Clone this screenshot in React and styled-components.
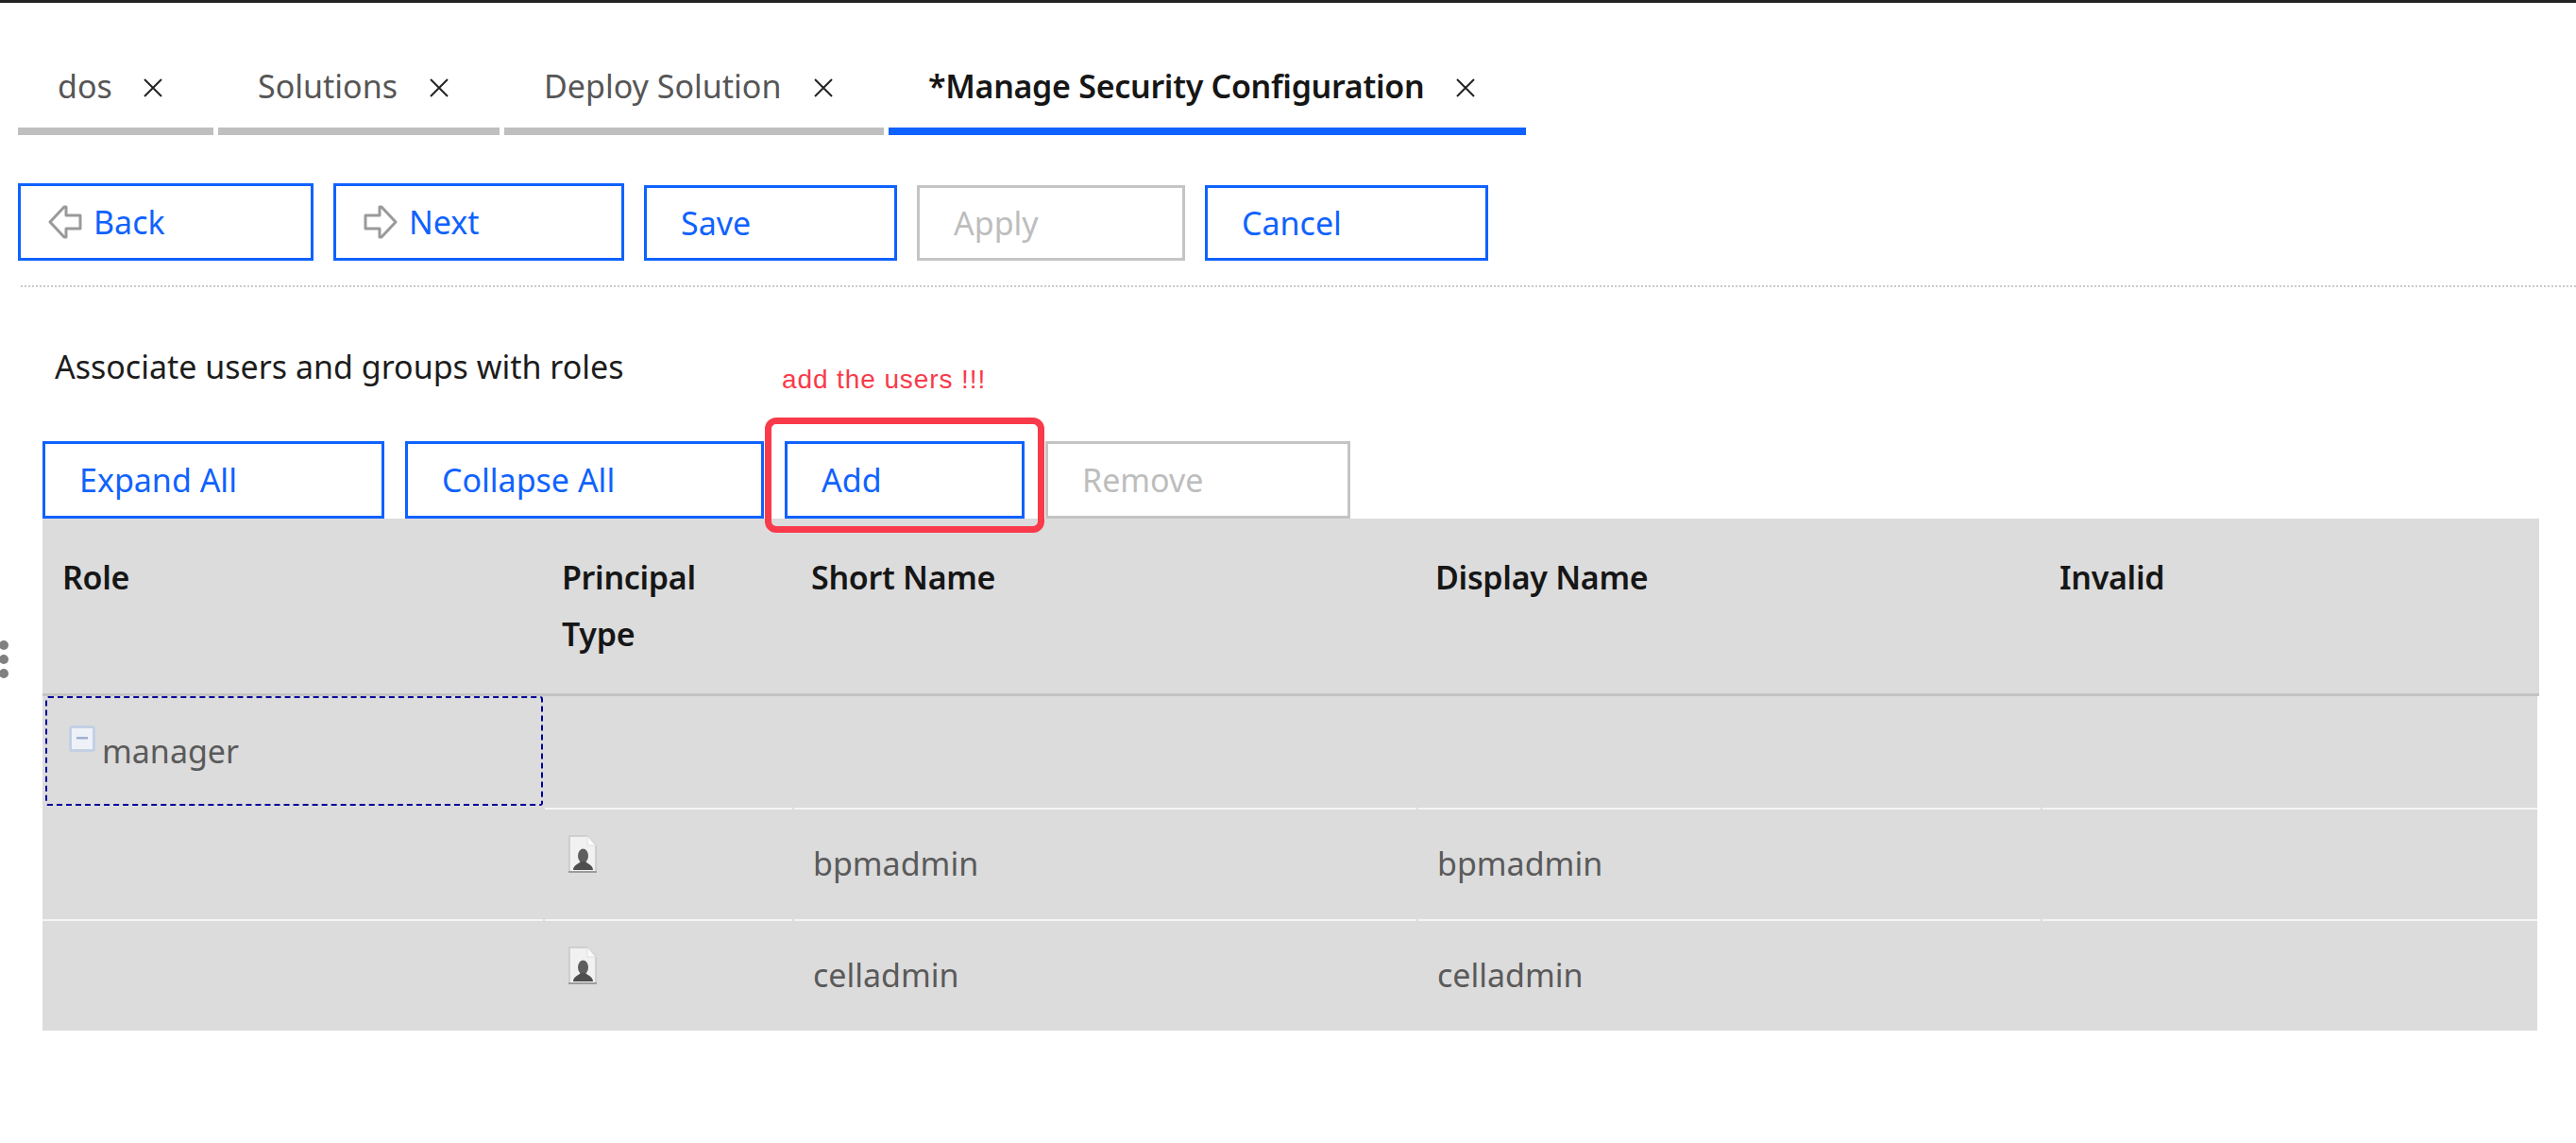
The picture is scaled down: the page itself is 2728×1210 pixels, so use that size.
import React from 'react';
import styled, { createGlobalStyle } from 'styled-components';

const Global = createGlobalStyle`
    html, body {
        margin: 0;
        padding: 0;
        background: #fff;
    }
    body {
        font-family: "Noto Sans", "Open Sans", sans-serif;
        overflow: hidden;
    }
`

const Page = styled.div`
    width: 2728px;
    height: 1210px;
    box-sizing: border-box;
    border-top: 3px solid #222;
    overflow: hidden;
`

const TabBar = styled.div`
    display: flex;
    gap: 5px;
    margin: 67px 0 0 19px;
`

const Tab = styled.div`
    width: ${props => props.$width}px;
    height: 73px;
    box-sizing: border-box;
    padding: 0 53px 24px 42px;
    display: flex;
    align-items: center;
    justify-content: space-between;
    border-bottom: 8px solid ${props => props.$active ? '#0f62fe' : '#bfbfbf'};
    color: ${props => props.$active ? '#161616' : '#565656'};
    font-size: 34px;
    font-weight: ${props => props.$active ? 600 : 400};
    letter-spacing: ${props => props.$active ? '-0.3px' : '0'};
`

const CloseIcon = styled.svg`
    width: 22px;
    height: 22px;
    flex: none;
    margin-top: 4px;
`

const ActionBar = styled.div`
    display: flex;
    align-items: flex-end;
    gap: 21px;
    margin: 51px 0 0 19px;
`

const Button = styled.div`
    width: ${props => props.$width}px;
    height: ${props => props.$tall ? 82 : 80}px;
    box-sizing: border-box;
    display: flex;
    align-items: center;
    gap: 12px;
    padding-left: ${props => props.$icon ? 29 : 36}px;
    border: 3px solid ${props => props.$disabled ? '#c4c4c4' : '#0f62fe'};
    background: #fff;
    color: ${props => props.$disabled ? '#bdbdbd' : '#0f62fe'};
    font-size: 34px;
`

const ArrowIcon = styled.svg`
    width: 36px;
    height: 36px;
    flex: none;
    filter: blur(0.6px);
`

const Divider = styled.div`
    margin: 26px 0 0 22px;
    border-top: 2px dotted #c9c9c9;
`

const Heading = styled.div`
    margin: 62px 0 0 58px;
    height: 44px;
    line-height: 44px;
    font-size: 34px;
    color: #1c1c1c;
`

const ToolBar = styled.div`
    display: flex;
    gap: 22px;
    margin: 57px 0 0 45px;
`

const AddSlot = styled.div`
    position: relative;
`

const Highlight = styled.div`
    position: absolute;
    left: -21px;
    top: -25px;
    width: 296px;
    height: 122px;
    box-sizing: border-box;
    border: 7px solid #f93a4a;
    border-radius: 12px;
    z-index: 2;
`

const Note = styled.div`
    position: absolute;
    left: -3px;
    top: -81px;
    white-space: nowrap;
    font-family: "Liberation Sans", Arial, sans-serif;
    font-size: 28px;
    letter-spacing: 0.9px;
    color: #f93a4a;
`

const Table = styled.div`
    position: relative;
    width: 2644px;
    margin-left: 45px;
`

const Dots = styled.div`
    position: absolute;
    left: -46px;
    top: 129px;
    display: flex;
    flex-direction: column;
    gap: 5px;
    span {
        width: 10px;
        height: 10px;
        border-radius: 50%;
        background: #808080;
    }
`

const columns = '530px 262px 659px 659px 1fr';

const HeadRow = styled.div`
    display: grid;
    grid-template-columns: ${columns};
    column-gap: 2px;
    height: 188px;
    box-sizing: border-box;
    background: #dcdcdc;
    border-bottom: 3px solid #c4c4c4;
`

const HeadCell = styled.div`
    padding: 32px 0 0 ${props => props.$first ? 21 : 18}px;
    font-size: 34px;
    font-weight: 600;
    line-height: 60px;
    letter-spacing: -0.3px;
    color: #161616;
`

const Row = styled.div`
    display: grid;
    grid-template-columns: ${columns};
    column-gap: 2px;
    width: 2642px;
    height: ${props => props.$height}px;
    background: #dcdcdc;
`

const Cell = styled.div`
    position: relative;
    display: flex;
    align-items: center;
    box-sizing: border-box;
    padding: 0 0 3px 20px;
    font-size: 34px;
    color: #5a5a5a;
    border-bottom: ${props => props.$last ? 'none' : '2px solid #f5f5f5'};
`

const RoleCell = styled(Cell)`
    padding: 0 0 0 23px;
    gap: 7px;
    margin: 0 0 4px 3px;
    border: 2px dashed #00009a;
    border-radius: 3px;
`

const RoleLabel = styled.span`
    margin-bottom: 1px;
`

const ExpandIcon = styled.svg`
    width: 28px;
    height: 28px;
    flex: none;
    margin-top: -26px;
`

const UserIcon = styled.svg`
    width: 30px;
    height: 40px;
    flex: none;
    margin: -20px 0 0 5px;
`

const Close = () => (
    <CloseIcon viewBox="0 0 22 22">
        <path d="M2 2 L20 20 M20 2 L2 20" stroke="#222" strokeWidth="2" fill="none" />
    </CloseIcon>
)

const Arrow = ({ flip }) => (
    <ArrowIcon viewBox="0 0 36 36">
        <path
            d={flip
                ? 'M34 18 L19 2 H17 V11 H2 V25 H17 V34 H19 Z'
                : 'M2 18 L17 2 H19 V11 H34 V25 H19 V34 H17 Z'}
            stroke="#9a9a9a"
            strokeWidth="3"
            fill="#fff"
            strokeLinejoin="round"
        />
    </ArrowIcon>
)

const Expand = () => (
    <ExpandIcon viewBox="0 0 28 28">
        <rect x="1.5" y="1.5" width="25" height="25" rx="2" fill="#eef2f8" stroke="#c3d0e4" strokeWidth="3" />
        <rect x="8" y="12" width="12" height="2.5" fill="#9db0cf" />
    </ExpandIcon>
)

const User = () => (
    <UserIcon viewBox="0 0 30 40">
        <path d="M1 1 H20 L29 11 V39 H1 Z" fill="#f1f1f1" stroke="#c6c6c6" strokeWidth="1.5" />
        <path d="M20 1 V11 H29 Z" fill="#fafafa" stroke="#dedede" strokeWidth="1" />
        <ellipse cx="15.5" cy="22" rx="5.5" ry="7.5" fill="#5e5e5e" />
        <path d="M5 37 C5 32 10 31 13 28 H18 C21 31 26 32 26 37 Z" fill="#4e4e4e" />
        <rect x="0" y="38" width="30" height="2" fill="#9c9c9c" />
    </UserIcon>
)

const tabs = [
    { label: 'dos', width: 207 },
    { label: 'Solutions', width: 298 },
    { label: 'Deploy Solution', width: 402 },
    { label: '*Manage Security Configuration', width: 675, active: true },
]

const users = ['bpmadmin', 'celladmin']

function App() {
    return (
        <Page>
            <Global />
            <TabBar>
                {tabs.map(tab => (
                    <Tab key={tab.label} $width={tab.width} $active={tab.active}>
                        <span>{tab.label}</span>
                        <Close />
                    </Tab>
                ))}
            </TabBar>
            <ActionBar>
                <Button $width={313} $tall $icon><Arrow />Back</Button>
                <Button $width={308} $tall $icon><Arrow flip />Next</Button>
                <Button $width={268}>Save</Button>
                <Button $width={284} $disabled>Apply</Button>
                <Button $width={300}>Cancel</Button>
            </ActionBar>
            <Divider />
            <Heading>Associate users and groups with roles</Heading>
            <ToolBar>
                <Button $width={362} $tall>Expand All</Button>
                <Button $width={380} $tall>Collapse All</Button>
                <AddSlot>
                    <Note>add the users !!!</Note>
                    <Highlight />
                    <Button $width={254} $tall>Add</Button>
                </AddSlot>
                <Button $width={323} $tall $disabled>Remove</Button>
            </ToolBar>
            <Table>
                <Dots><span /><span /><span /></Dots>
                <HeadRow>
                    <HeadCell $first>Role</HeadCell>
                    <HeadCell>Principal<br />Type</HeadCell>
                    <HeadCell>Short Name</HeadCell>
                    <HeadCell>Display Name</HeadCell>
                    <HeadCell>Invalid</HeadCell>
                </HeadRow>
                <Row $height={120}>
                    <RoleCell><Expand /><RoleLabel>manager</RoleLabel></RoleCell>
                    <Cell /><Cell /><Cell /><Cell />
                </Row>
                {users.map((name, i) => (
                    <Row key={name} $height={i === 0 ? 118 : 116}>
                        <Cell $last={i === 1} />
                        <Cell $last={i === 1}><User /></Cell>
                        <Cell $last={i === 1}>{name}</Cell>
                        <Cell $last={i === 1}>{name}</Cell>
                        <Cell $last={i === 1} />
                    </Row>
                ))}
            </Table>
        </Page>
    );
}

export default App;
